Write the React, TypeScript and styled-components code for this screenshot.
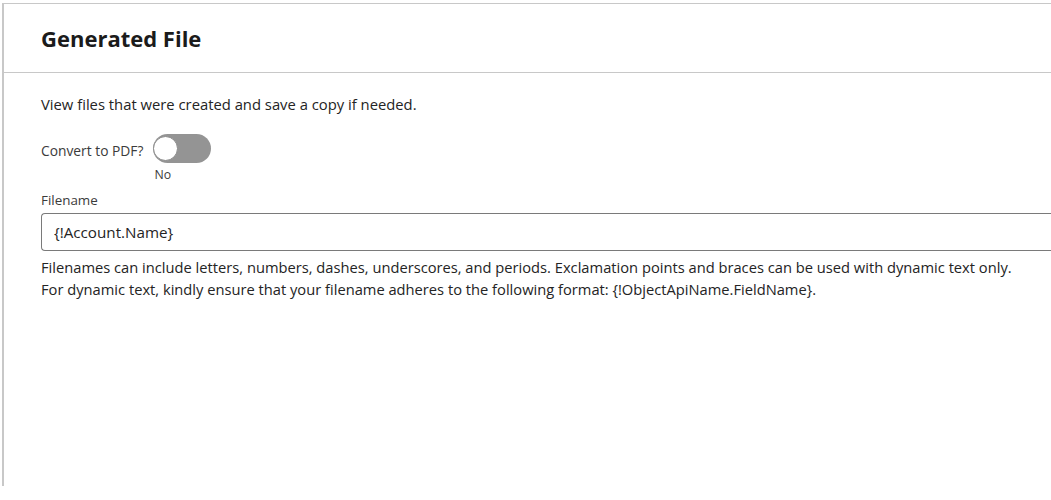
import { useState } from 'react'
import styled, { createGlobalStyle } from 'styled-components'

const GlobalStyle = createGlobalStyle`
  html, body {
    margin: 0;
    padding: 0;
    background: #ffffff;
    overflow: hidden;
  }
  body {
    font-family: "Open Sans", "Noto Sans", sans-serif;
    color: #242424;
  }
`

const Page = styled.div`
  padding: 3px 0 0 2px;
`

const Panel = styled.section`
  border-top: 1px solid #c8c8c8;
  border-left: 2px solid #c8c8c8;
  height: 483px;
  box-sizing: border-box;
`

const Header = styled.header`
  height: 69px;
  box-sizing: border-box;
  border-bottom: 1px solid #c8c8c8;
  display: flex;
  align-items: center;
  padding-left: 37px;
`

const Title = styled.h2`
  margin: 0;
  font-size: 22px;
  font-weight: 700;
  color: #1b1b1b;
`

const Body = styled.div`
  padding: 20px 0 0 37px;
  display: flex;
  flex-direction: column;
`

const Intro = styled.p`
  margin: 0;
  font-size: 14.8px;
  line-height: 22px;
`

const ToggleRow = styled.div`
  display: flex;
  align-items: flex-start;
  gap: 10px;
  margin-top: 19px;
`

const ToggleLabel = styled.span`
  font-size: 13.8px;
  color: #3b3b3b;
  line-height: 20px;
  margin-top: 7px;
`

const ToggleStack = styled.div`
  display: flex;
  flex-direction: column;
  align-items: flex-start;
`

const Track = styled.button<{ $on: boolean }>`
  width: 58px;
  height: 29px;
  border-radius: 15px;
  border: none;
  padding: 0;
  background: ${p => (p.$on ? '#0f6cbd' : '#949494')};
  display: flex;
  align-items: center;
  justify-content: ${p => (p.$on ? 'flex-end' : 'flex-start')};
  cursor: pointer;
`

const Knob = styled.span`
  width: 25px;
  height: 25px;
  border-radius: 50%;
  background: #ffffff;
  border: 1.5px solid #8a8a8a;
  box-sizing: border-box;
`

const StateText = styled.span`
  font-size: 12.3px;
  color: #3b3b3b;
  margin-left: 1px;
  line-height: 16px;
  margin-top: 4px;
`

const FieldLabel = styled.label`
  font-size: 13.4px;
  color: #3b3b3b;
  margin-top: 8px;
  line-height: 18px;
`

const Input = styled.input`
  margin-top: 4px;
  width: 100%;
  height: 38px;
  box-sizing: border-box;
  border: 1px solid #7a7a7a;
  border-right: none;
  border-radius: 4px 0 0 4px;
  padding: 0 12px;
  font-family: "Open Sans", "Noto Sans", sans-serif;
  font-size: 15.2px;
  color: #242424;
  outline: none;
`

const Help = styled.p`
  margin: 5px 0 0 0;
  font-size: 14.7px;
  line-height: 22px;
  color: #242424;
`

export default function App() {
  const [pdf, setPdf] = useState(false)
  const [name, setName] = useState('{!Account.Name}')

  return (
    <>
      <GlobalStyle />
      <Page>
        <Panel>
          <Header>
            <Title>Generated File</Title>
          </Header>
          <Body>
            <Intro>View files that were created and save a copy if needed.</Intro>
            <ToggleRow>
              <ToggleLabel>Convert to PDF?</ToggleLabel>
              <ToggleStack>
                <Track $on={pdf} onClick={() => setPdf(!pdf)} aria-label="Convert to PDF">
                  <Knob />
                </Track>
                <StateText>{pdf ? 'Yes' : 'No'}</StateText>
              </ToggleStack>
            </ToggleRow>
            <FieldLabel htmlFor="filename">Filename</FieldLabel>
            <Input id="filename" value={name} onChange={e => setName(e.target.value)} />
            <Help>
              Filenames can include letters, numbers, dashes, underscores, and periods. Exclamation points and braces can be used with dynamic text only.
              <br />
              For dynamic text, kindly ensure that your filename adheres to the following format: {'{!ObjectApiName.FieldName}'}.
            </Help>
          </Body>
        </Panel>
      </Page>
    </>
  )
}
